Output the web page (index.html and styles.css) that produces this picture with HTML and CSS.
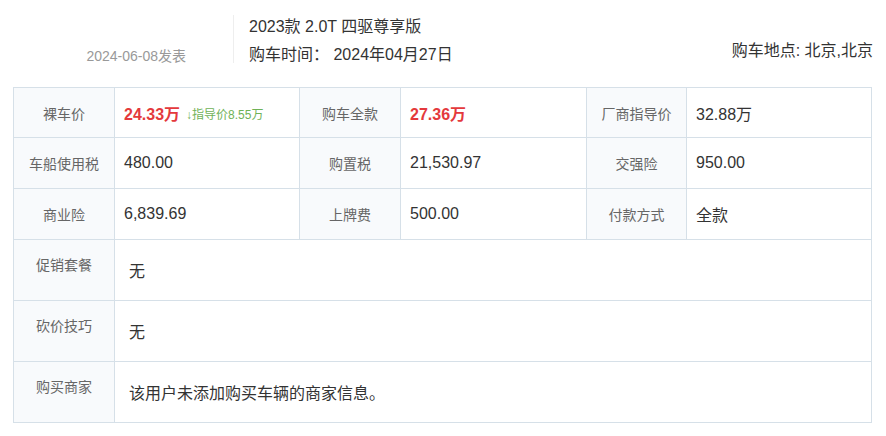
FILE: index.html
```html
<!DOCTYPE html>
<html lang="zh-CN">
<head>
    <meta charset="UTF-8">
    <title>购车价格</title>
    <link rel="stylesheet" href="styles.css">
</head>
<body>
    <div class="page">
        <!-- Header -->
        <div class="head">
            <div class="head-date">2024-06-08发表</div>
            <div class="head-main">
                <p class="car-name">2023款 2.0T 四驱尊享版</p>
                <p class="buy-time">购车时间： 2024年04月27日</p>
            </div>
            <div class="head-place">购车地点: 北京,北京</div>
        </div>

        <!-- Price table -->
        <div class="price-grid">
            <div class="cell label">裸车价</div>
            <div class="cell value"><span class="price-red">24.33万</span><span class="price-down">↓指导价8.55万</span></div>
            <div class="cell label">购车全款</div>
            <div class="cell value"><span class="price-red">27.36万</span></div>
            <div class="cell label">厂商指导价</div>
            <div class="cell value">32.88万</div>

            <div class="cell label">车船使用税</div>
            <div class="cell value">480.00</div>
            <div class="cell label">购置税</div>
            <div class="cell value">21,530.97</div>
            <div class="cell label">交强险</div>
            <div class="cell value">950.00</div>

            <div class="cell label">商业险</div>
            <div class="cell value">6,839.69</div>
            <div class="cell label">上牌费</div>
            <div class="cell value">500.00</div>
            <div class="cell label">付款方式</div>
            <div class="cell value">全款</div>

            <div class="cell label label-top">促销套餐</div>
            <div class="cell value wide">无</div>

            <div class="cell label label-top">砍价技巧</div>
            <div class="cell value wide">无</div>

            <div class="cell label label-top">购买商家</div>
            <div class="cell value wide">该用户未添加购买车辆的商家信息。</div>
        </div>
    </div>
</body>
</html>
```

FILE: styles.css
```css
/* General */
body {
    margin: 0;
    background: #fff;
    color: #333;
    font-family: "Liberation Sans", "Noto Sans CJK SC", sans-serif;
}

p {
    margin: 0;
}

.page {
    width: 859px;
    padding-left: 13px;
}

/* Header */
.head {
    display: flex;
    height: 87px;
}

.head-date {
    width: 173px;
    padding-top: 46px;
    text-align: right;
    font-size: 14px;
    line-height: 20px;
    color: #999;
    flex: none;
    margin-right: 47px;
}

.head-main {
    border-left: 1px solid #eee;
    height: 48px;
    margin-top: 15px;
    padding-left: 15px;
    flex: 1;
}

.car-name,
.buy-time {
    font-size: 16px;
    line-height: 28px;
    color: #333;
}

.car-name {
    margin-top: -2px;
}

.head-place {
    padding-top: 40px;
    font-size: 16px;
    line-height: 22px;
    color: #333;
    margin-right: -1px;
}

/* Price table */
.price-grid {
    display: grid;
    grid-template-columns: 100px 184px 100px 185px 99px 184px;
    grid-template-rows: 49px 50px 50px 60px 60px 60px;
    gap: 1px;
    padding: 1px;
    background: #d6e0e8;
}

.cell {
    display: flex;
    align-items: center;
    background: #fff;
}

.label {
    justify-content: center;
    background: #f8fafc;
    font-size: 14px;
    color: #666;
}

.label-top {
    align-items: flex-start;
    padding-top: 14px;
}

.value {
    padding-left: 9px;
    font-size: 16px;
    color: #333;
}

.wide {
    grid-column: span 5;
    padding-left: 14px;
}

.price-red {
    color: #e4393c;
    font-weight: bold;
}

.price-down {
    margin-left: 6px;
    font-size: 12px;
    color: #6fb257;
    padding-top: 2px;
}
```
